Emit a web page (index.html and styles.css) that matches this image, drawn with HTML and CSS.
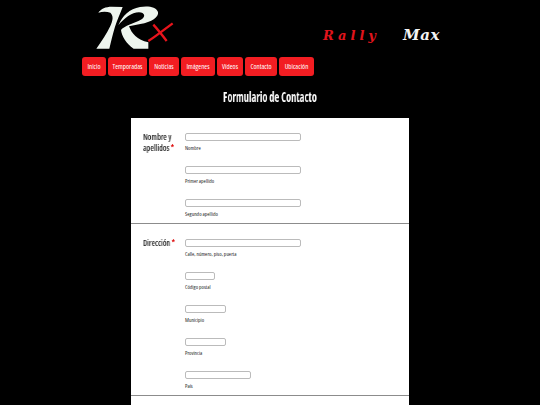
FILE: index.html
```html
<!DOCTYPE html>
<html lang="es">
<head>
    <meta charset="UTF-8">
    <meta name="viewport" content="width=device-width, initial-scale=1.0">
    <title>Formulario de Contacto - Rally Max</title>
    <link rel="stylesheet" href="styles.css">
</head>
<body>

<div class="top">
    <!-- Cabecera -->
    <div class="header">
        <svg class="logo" viewBox="0 0 285 165" width="95" height="55" aria-label="Rx">
            <path fill="#eef5ee" d="M40 38 C48 26 62 20 80 20 L113 21 C106 40 97 58 90 80 C84 100 78 124 73 146 L34 146 C50 124 66 100 76 78 C84 60 86 48 76 38 C66 34 52 34 40 38 Z"/>
            <path fill="#eef5ee" d="M100 76 C112 48 134 26 165 21 C188 17 214 20 219 36 C222 52 200 66 166 72 L132 79 C140 100 156 120 190 127 L190 146 L146 146 C124 132 110 108 108 90 C116 78 150 70 170 58 C182 50 180 38 162 37 C140 37 118 54 100 76 Z"/>
            <path fill="none" stroke="#e8141c" stroke-width="7" d="M190 123 C214 108 238 88 263 70"/>
            <path fill="none" stroke="#e8141c" stroke-width="7" d="M205 74 C218 88 232 106 245 123"/>
        </svg>
        <div class="brand">
            <span class="brand-red">Rally</span>
            <span class="brand-white">Max</span>
        </div>
    </div>

    <!-- Menu -->
    <div class="nav">
        <a class="nav-btn">Inicio</a>
        <a class="nav-btn">Temporadas</a>
        <a class="nav-btn">Noticias</a>
        <a class="nav-btn">Imágenes</a>
        <a class="nav-btn">Vídeos</a>
        <a class="nav-btn">Contacto</a>
        <a class="nav-btn">Ubicación</a>
    </div>
</div>

<h1 class="title">Formulario de Contacto</h1>

<div class="form">
    <div class="row">
        <div class="row-label">Nombre y apellidos <span class="req">*</span></div>
        <div class="fields">
            <div class="field"><input class="input w-long" type="text"><label class="sub">Nombre</label></div>
            <div class="field"><input class="input w-long" type="text"><label class="sub">Primer apellido</label></div>
            <div class="field"><input class="input w-long" type="text"><label class="sub">Segundo apellido</label></div>
        </div>
    </div>
    <div class="row">
        <div class="row-label">Dirección <span class="req">*</span></div>
        <div class="fields">
            <div class="field"><input class="input w-long" type="text"><label class="sub">Calle, número, piso, puerta</label></div>
            <div class="field"><input class="input w-zip" type="text"><label class="sub">Código postal</label></div>
            <div class="field"><input class="input w-mid" type="text"><label class="sub">Municipio</label></div>
            <div class="field"><input class="input w-mid" type="text"><label class="sub">Provincia</label></div>
            <div class="field"><input class="input w-wide" type="text"><label class="sub">País</label></div>
        </div>
    </div>
    <div class="row-end"></div>
</div>

</body>
</html>
```

FILE: styles.css
```css
body {
    margin: 0;
    height: 405px;
    overflow: hidden;
    background: #000;
    color: #fff;
    font-family: "Open Sans", "Noto Sans", sans-serif;
    font-stretch: 75%;
}

.top {
    margin-left: 82px;
    width: 358px;
}

.header {
    height: 57px;
    display: flex;
    align-items: flex-start;
    justify-content: space-between;
}

.logo {
    margin-left: 3px;
}

.brand {
    display: flex;
    gap: 23px;
    margin-top: 26px;
    font-family: "DejaVu Serif", serif;
    font-style: italic;
    font-weight: bold;
    font-stretch: normal;
    font-size: 13px;
}

.brand-red {
    margin-top: 2px;
    color: #e0141c;
    letter-spacing: 4px;
}

.brand-white {
    color: #f4f4f4;
    font-size: 15px;
    letter-spacing: 0.6px;
}

/* Anchos de los botones como en el menu original */
.nav {
    display: grid;
    grid-template-columns: 24px 39px 30px 34px 26px 32px 35px;
    gap: 2px;
}

.nav-btn {
    height: 19px;
    line-height: 19px;
    text-align: center;
    background: #f21d22;
    border-radius: 3px;
    font-size: 7px;
    color: #fff;
    white-space: nowrap;
}

.title {
    margin: 13px 0 14px;
    height: 15px;
    line-height: 15px;
    text-align: center;
    font-size: 14px;
    font-weight: 700;
    transform: scaleX(0.74);
    will-change: transform;
}

.form {
    width: 278px;
    margin-left: 131px;
    background: #fff;
    color: #222;
}

.row {
    display: flex;
    padding-top: 10px;
    border-bottom: 1px solid #8c8c8c;
}

.row-end {
    height: 20px;
}

.row-label {
    width: 42px;
    margin: 3px 0 0 12px;
    font-size: 9px;
    line-height: 11px;
    font-weight: 600;
    color: #222;
    flex: none;
    transform: scaleX(0.88);
    transform-origin: left;
    will-change: transform;
}

.req {
    color: #d00;
}

.field {
    height: 33px;
    padding-top: 5px;
    box-sizing: border-box;
}

.field:last-child {
    height: 29px;
}

.input {
    display: block;
    height: 8px;
    box-sizing: border-box;
    margin: 0;
    padding: 0;
    background: #fff;
    border: 1px solid #bbb;
    border-radius: 2px;
}

.w-long {
    width: 116px;
}

.w-zip {
    width: 30px;
}

.w-mid {
    width: 41px;
}

.w-wide {
    width: 66px;
}

.sub {
    display: block;
    margin-top: 4px;
    font-size: 5.5px;
    line-height: 7px;
    font-weight: 500;
    color: #222;
}
```
